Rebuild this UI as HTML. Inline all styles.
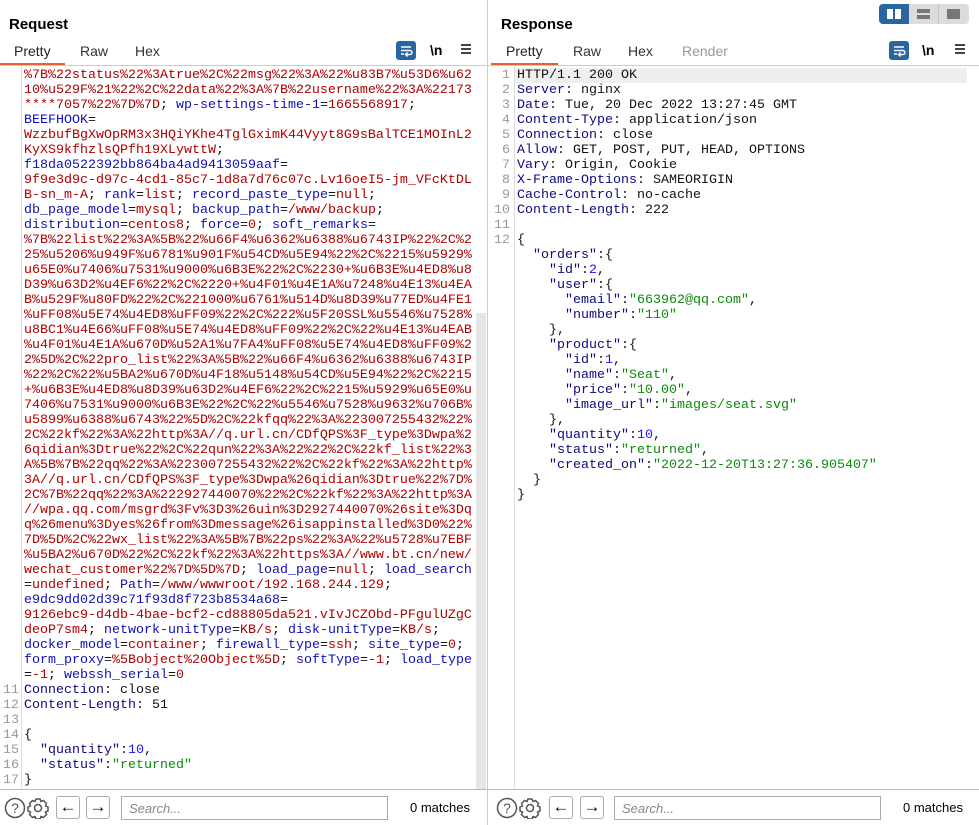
<!DOCTYPE html>
<html><head><meta charset="utf-8"><style>
*{margin:0;padding:0;box-sizing:border-box}
body{width:979px;height:825px;background:#fff;position:relative;overflow:hidden;font-family:"Liberation Sans",sans-serif;color:#000}
.abs{position:absolute}
.title{font-weight:bold;font-size:15px;top:16px}
.tab{font-size:14px;top:43px;color:#333}
.code{position:absolute;font-family:"Liberation Mono",monospace;font-size:13.33px;line-height:15px;white-space:pre;top:67.5px}
.ln{position:absolute;font-family:"Liberation Mono",monospace;font-size:13.33px;line-height:15px;white-space:pre;top:67.5px;color:#999;text-align:right}
.r{color:#b00000}.b{color:#1010b8}.n{color:#0b0b80}.g{color:#0a8a0a}.nb{color:#1515ff}.k{color:#111}
.wrap{width:20px;height:19px;background:#2a65a0;border-radius:3px}
.btn{width:24px;height:23px;border:1px solid #aaa;border-radius:3px;top:796px;text-align:center;font-size:17px;line-height:20px}
.search{top:796px;height:24px;border:1px solid #aaa;font-style:italic;color:#888;font-size:13px;padding:4px 7px}
.matches{top:800px;font-size:13px}
</style></head><body>
<!-- left panel -->
<div class="abs title" style="left:9px">Request</div>
<div class="abs tab" style="left:14px;color:#222">Pretty</div>
<div class="abs tab" style="left:80px">Raw</div>
<div class="abs tab" style="left:135px">Hex</div>
<div class="abs" style="left:0;top:63px;width:65px;height:2px;background:#e8602c"></div>
<div class="abs" style="left:0;top:65px;width:487px;height:1px;background:#ccc"></div>
<div class="abs wrap" style="left:396px;top:41px"><svg width="20" height="19"><path d="M5 6h10M5 9.5h9a2 2 0 0 1 0 4h-4M11.5 11.5l-2 2 2 2M5 13h3" stroke="#fff" stroke-width="1.4" fill="none"/></svg></div>
<div class="abs" style="left:430px;top:42px;font-size:14px;font-weight:bold">\n</div>
<div class="abs" style="left:461px;top:44px;width:10px;height:2px;background:#444;box-shadow:0 4px #444,0 8px #444"></div>
<div class="abs" style="left:21px;top:66px;width:1px;height:723px;background:#ddd"></div>
<div class="abs" style="left:476px;top:313px;width:10px;height:476px;background:#e6e6e6"></div>
<div class="abs" style="left:487px;top:0;width:1px;height:825px;background:#ccc"></div>
<div class="ln" style="left:0;width:19px;top:682.5px">11
12
13
14
15
16
17</div>
<div class="code r" style="left:24px">%7B%22status%22%3Atrue%2C%22msg%22%3A%22%u83B7%u53D6%u62
10%u529F%21%22%2C%22data%22%3A%7B%22username%22%3A%22173
****7057%22%7D%7D<span class="k">;</span> <span class="b">wp-settings-time-1</span><span class="k">=</span>1665568917<span class="k">;</span>
<span class="b">BEEFHOOK</span><span class="k">=</span>
WzzbufBgXwOpRM3x3HQiYKhe4TglGximK44Vyyt8G9sBalTCE1MOInL2
KyXS9kfhzlsQPfh19XLywttW<span class="k">;</span>
<span class="b">f18da0522392bb864ba4ad9413059aaf</span><span class="k">=</span>
9f9e3d9c-d97c-4cd1-85c7-1d8a7d76c07c.Lv16oeI5-jm_VFcKtDL
B-sn_m-A<span class="k">;</span> <span class="b">rank</span><span class="k">=</span>list<span class="k">;</span> <span class="b">record_paste_type</span><span class="k">=</span>null<span class="k">;</span>
<span class="b">db_page_model</span><span class="k">=</span>mysql<span class="k">;</span> <span class="b">backup_path</span><span class="k">=</span>/www/backup<span class="k">;</span>
<span class="b">distribution</span><span class="k">=</span>centos8<span class="k">;</span> <span class="b">force</span><span class="k">=</span>0<span class="k">;</span> <span class="b">soft_remarks</span><span class="k">=</span>
%7B%22list%22%3A%5B%22%u66F4%u6362%u6388%u6743IP%22%2C%2
25%u5206%u949F%u6781%u901F%u54CD%u5E94%22%2C%2215%u5929%
u65E0%u7406%u7531%u9000%u6B3E%22%2C%2230+%u6B3E%u4ED8%u8
D39%u63D2%u4EF6%22%2C%2220+%u4F01%u4E1A%u7248%u4E13%u4EA
B%u529F%u80FD%22%2C%221000%u6761%u514D%u8D39%u77ED%u4FE1
%uFF08%u5E74%u4ED8%uFF09%22%2C%222%u5F20SSL%u5546%u7528%
u8BC1%u4E66%uFF08%u5E74%u4ED8%uFF09%22%2C%22%u4E13%u4EAB
%u4F01%u4E1A%u670D%u52A1%u7FA4%uFF08%u5E74%u4ED8%uFF09%2
2%5D%2C%22pro_list%22%3A%5B%22%u66F4%u6362%u6388%u6743IP
%22%2C%22%u5BA2%u670D%u4F18%u5148%u54CD%u5E94%22%2C%2215
+%u6B3E%u4ED8%u8D39%u63D2%u4EF6%22%2C%2215%u5929%u65E0%u
7406%u7531%u9000%u6B3E%22%2C%22%u5546%u7528%u9632%u706B%
u5899%u6388%u6743%22%5D%2C%22kfqq%22%3A%223007255432%22%
2C%22kf%22%3A%22http%3A//q.url.cn/CDfQPS%3F_type%3Dwpa%2
6qidian%3Dtrue%22%2C%22qun%22%3A%22%22%2C%22kf_list%22%3
A%5B%7B%22qq%22%3A%223007255432%22%2C%22kf%22%3A%22http%
3A//q.url.cn/CDfQPS%3F_type%3Dwpa%26qidian%3Dtrue%22%7D%
2C%7B%22qq%22%3A%222927440070%22%2C%22kf%22%3A%22http%3A
//wpa.qq.com/msgrd%3Fv%3D3%26uin%3D2927440070%26site%3Dq
q%26menu%3Dyes%26from%3Dmessage%26isappinstalled%3D0%22%
7D%5D%2C%22wx_list%22%3A%5B%7B%22ps%22%3A%22%u5728%u7EBF
%u5BA2%u670D%22%2C%22kf%22%3A%22https%3A//www.bt.cn/new/
wechat_customer%22%7D%5D%7D<span class="k">;</span> <span class="b">load_page</span><span class="k">=</span>null<span class="k">;</span> <span class="b">load_search</span>
<span class="k">=</span>undefined<span class="k">;</span> <span class="b">Path</span><span class="k">=</span>/www/wwwroot/192.168.244.129<span class="k">;</span>
<span class="b">e9dc9dd02d39c71f93d8f723b8534a68</span><span class="k">=</span>
9126ebc9-d4db-4bae-bcf2-cd88805da521.vIvJCZObd-PFgulUZgC
deoP7sm4<span class="k">;</span> <span class="b">network-unitType</span><span class="k">=</span>KB/s<span class="k">;</span> <span class="b">disk-unitType</span><span class="k">=</span>KB/s<span class="k">;</span>
<span class="b">docker_model</span><span class="k">=</span>container<span class="k">;</span> <span class="b">firewall_type</span><span class="k">=</span>ssh<span class="k">;</span> <span class="b">site_type</span><span class="k">=</span>0<span class="k">;</span>
<span class="b">form_proxy</span><span class="k">=</span>%5Bobject%20Object%5D<span class="k">;</span> <span class="b">softType</span><span class="k">=</span>-1<span class="k">;</span> <span class="b">load_type</span>
<span class="k">=</span>-1<span class="k">;</span> <span class="b">webssh_serial</span><span class="k">=</span>0
<span class="n">Connection</span><span class="k">: close</span>
<span class="n">Content-Length</span><span class="k">: 51</span>

<span class="k">{</span>
<span class="n">  "quantity"</span><span class="k">:</span><span class="nb">10</span><span class="k">,</span>
<span class="n">  "status"</span><span class="k">:</span><span class="g">"returned"</span>
<span class="k">}</span></div>
<div class="abs" style="left:0;top:789px;width:487px;height:1px;background:#bbb"></div>
<svg class="abs" style="left:4px;top:797px" width="48" height="22"><circle cx="11" cy="11" r="9.5" stroke="#555" stroke-width="1.5" fill="none"/><text x="11" y="16" font-size="14" text-anchor="middle" fill="#555" font-family="Liberation Sans">?</text><g transform="translate(34 11)" stroke="#555" stroke-width="1.5" fill="none"><circle r="3.5"/><path d="M-2 -9h4l1 2.5 2.5-1 3 3-1 2.5 2.5 1v4l-2.5 1 1 2.5-3 3-2.5-1-1 2.5h-4l-1-2.5-2.5 1-3-3 1-2.5-2.5-1v-4l2.5-1-1-2.5 3-3 2.5 1z"/></g></svg>
<div class="abs btn" style="left:56px">&larr;</div>
<div class="abs btn" style="left:86px">&rarr;</div>
<div class="abs search" style="left:121px;width:267px">Search...</div>
<div class="abs matches" style="left:410px">0 matches</div>

<!-- right panel -->
<div class="abs" style="left:879px;top:4px;width:90px;height:20px;background:#dcdcdc;border-radius:4px"></div>
<div class="abs" style="left:879px;top:4px;width:30px;height:20px;background:#2a65a0;border-radius:4px 0 0 4px"></div>
<div class="abs" style="left:938px;top:4px;width:1px;height:20px;background:#c4c4c4"></div>
<div class="abs" style="left:887px;top:9px;width:6px;height:10px;background:#fff"></div>
<div class="abs" style="left:895px;top:9px;width:6px;height:10px;background:#fff"></div>
<div class="abs" style="left:917px;top:9px;width:13px;height:4px;background:#777"></div>
<div class="abs" style="left:917px;top:15px;width:13px;height:4px;background:#777"></div>
<div class="abs" style="left:947px;top:9px;width:13px;height:10px;background:#777"></div>
<div class="abs title" style="left:501px">Response</div>
<div class="abs tab" style="left:506px;color:#222">Pretty</div>
<div class="abs tab" style="left:573px">Raw</div>
<div class="abs tab" style="left:628px">Hex</div>
<div class="abs tab" style="left:682px;color:#999">Render</div>
<div class="abs" style="left:491px;top:63px;width:67px;height:2px;background:#e8602c"></div>
<div class="abs" style="left:488px;top:65px;width:491px;height:1px;background:#ccc"></div>
<div class="abs wrap" style="left:889px;top:41px"><svg width="20" height="19"><path d="M5 6h10M5 9.5h9a2 2 0 0 1 0 4h-4M11.5 11.5l-2 2 2 2M5 13h3" stroke="#fff" stroke-width="1.4" fill="none"/></svg></div>
<div class="abs" style="left:922px;top:42px;font-size:14px;font-weight:bold">\n</div>
<div class="abs" style="left:955px;top:44px;width:10px;height:2px;background:#444;box-shadow:0 4px #444,0 8px #444"></div>
<div class="abs" style="left:515px;top:68px;width:452px;height:15px;background:#efefef"></div>
<div class="abs" style="left:514px;top:66px;width:1px;height:723px;background:#ddd"></div>
<div class="ln" style="left:490px;width:20px"> 1
 2
 3
 4
 5
 6
 7
 8
 9
10
11
12</div>
<div class="code k" style="left:517px">HTTP/1.1 200 OK
<span class="n">Server</span>: nginx
<span class="n">Date</span>: Tue, 20 Dec 2022 13:27:45 GMT
<span class="n">Content-Type</span>: application/json
<span class="n">Connection</span>: close
<span class="n">Allow</span>: GET, POST, PUT, HEAD, OPTIONS
<span class="n">Vary</span>: Origin, Cookie
<span class="n">X-Frame-Options</span>: SAMEORIGIN
<span class="n">Cache-Control</span>: no-cache
<span class="n">Content-Length</span>: 222

{
<span class="n">  "orders"</span>:{
<span class="n">    "id"</span>:<span class="nb">2</span>,
<span class="n">    "user"</span>:{
<span class="n">      "email"</span>:<span class="g">"663962@qq.com"</span>,
<span class="n">      "number"</span>:<span class="g">"110"</span>
    },
<span class="n">    "product"</span>:{
<span class="n">      "id"</span>:<span class="nb">1</span>,
<span class="n">      "name"</span>:<span class="g">"Seat"</span>,
<span class="n">      "price"</span>:<span class="g">"10.00"</span>,
<span class="n">      "image_url"</span>:<span class="g">"images/seat.svg"</span>
    },
<span class="n">    "quantity"</span>:<span class="nb">10</span>,
<span class="n">    "status"</span>:<span class="g">"returned"</span>,
<span class="n">    "created_on"</span>:<span class="g">"2022-12-20T13:27:36.905407"</span>
  }
}</div>
<div class="abs" style="left:488px;top:789px;width:491px;height:1px;background:#bbb"></div>
<svg class="abs" style="left:496px;top:797px" width="48" height="22"><circle cx="11" cy="11" r="9.5" stroke="#555" stroke-width="1.5" fill="none"/><text x="11" y="16" font-size="14" text-anchor="middle" fill="#555" font-family="Liberation Sans">?</text><g transform="translate(34 11)" stroke="#555" stroke-width="1.5" fill="none"><circle r="3.5"/><path d="M-2 -9h4l1 2.5 2.5-1 3 3-1 2.5 2.5 1v4l-2.5 1 1 2.5-3 3-2.5-1-1 2.5h-4l-1-2.5-2.5 1-3-3 1-2.5-2.5-1v-4l2.5-1-1-2.5 3-3 2.5 1z"/></g></svg>
<div class="abs btn" style="left:549px">&larr;</div>
<div class="abs btn" style="left:580px">&rarr;</div>
<div class="abs search" style="left:614px;width:267px">Search...</div>
<div class="abs matches" style="left:903px">0 matches</div>
</body></html>
